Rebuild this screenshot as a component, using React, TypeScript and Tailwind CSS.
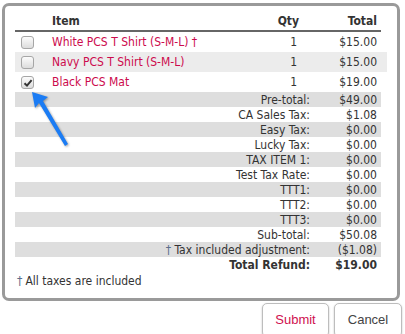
import React from "react";

const items = [
  { name: "White PCS T Shirt (S-M-L) †", qty: "1", total: "$15.00", checked: false },
  { name: "Navy PCS T Shirt (S-M-L)", qty: "1", total: "$15.00", checked: false },
  { name: "Black PCS Mat", qty: "1", total: "$19.00", checked: true },
];

const summary = [
  ["Pre-total:", "$49.00"],
  ["CA Sales Tax:", "$1.08"],
  ["Easy Tax:", "$0.00"],
  ["Lucky Tax:", "$0.00"],
  ["TAX ITEM 1:", "$0.00"],
  ["Test Tax Rate:", "$0.00"],
  ["TTT1:", "$0.00"],
  ["TTT2:", "$0.00"],
  ["TTT3:", "$0.00"],
  ["Sub-total:", "$50.08"],
  ["† Tax included adjustment:", "($1.08)"],
];

function Box({ checked }: { checked: boolean }) {
  return (
    <span className="relative block w-[13px] h-[13px] rounded-[3px] border border-[#a6a6a6] bg-gradient-to-b from-[#fcfcfc] to-[#dcdcdc]">
      {checked && (
        <svg className="absolute left-[1px] top-[1px]" width="10" height="10" viewBox="0 0 10 10">
          <path d="M1.5 5.2 L4 7.6 L8.6 2.2" fill="none" stroke="#333" strokeWidth="2" />
        </svg>
      )}
    </span>
  );
}

export default function App() {
  return (
    <div
      className="relative w-[405px] h-[334px] bg-white overflow-hidden text-[#333]"
      style={{ fontFamily: '"DejaVu Sans Condensed", "DejaVu Sans", sans-serif' }}
    >
      <div className="ml-[2px] mt-[3px] w-[398px] h-[298px] border-[3px] border-[#9a9a9a] rounded-[7px] pl-[10px] pt-[5px] text-[12px]">
        <div className="flex w-[366px] h-[21px] border-b-2 border-[#666] font-bold items-center leading-none">
          <div className="w-[37px]" />
          <div className="flex-1">Item</div>
          <div className="w-[40px] text-right">Qty</div>
          <div className="w-[82px] text-right pr-[4px]">Total</div>
        </div>
        {items.map((it, i) => (
          <div
            key={i}
            className={`flex w-[372px] h-[20px] items-center leading-none ${i === 1 ? "bg-[#ececec]" : ""}`}
          >
            <div className="w-[37px] pl-[6px]">
              <Box checked={it.checked} />
            </div>
            <div className="flex-1 text-[#cc0a4d] whitespace-nowrap">{it.name}</div>
            <div className="w-[37px] text-right pr-[2px]">{it.qty}</div>
            <div className="w-[88px] text-right pr-[10px]">{it.total}</div>
          </div>
        ))}
        {summary.map(([l, v], i) => (
          <div
            key={l}
            className={`flex w-[366px] h-[15px] items-center leading-none ${i % 2 === 0 ? "bg-[#dedede]" : ""}`}
          >
            <div className="flex-1 text-right whitespace-nowrap">
              {l.startsWith("†") ? (
                <>
                  <span className="text-[#5b6e8c]">†</span>
                  {l.slice(1)}
                </>
              ) : (
                l
              )}
            </div>
            <div className="w-[71px] text-right pr-[4px]">{v}</div>
          </div>
        ))}
        <div className="flex w-[366px] h-[15px] items-center leading-none font-bold">
          <div className="flex-1 text-right">Total Refund:</div>
          <div className="w-[71px] text-right pr-[4px]">$19.00</div>
        </div>
        <div className="h-[17px] flex items-center pl-[2px] leading-none">
          <span className="text-[#5b6e8c] mr-[3px]">†</span>All taxes are included
        </div>
      </div>
      <div className="flex justify-end gap-[5px] pr-[3px] mt-[2px]" style={{ fontFamily: '"Liberation Sans", Arial, sans-serif' }}>
        <button className="w-[67px] h-[34px] rounded-[5px] border border-[#bdbdbd] bg-white text-[#d0104f] text-[13px] shadow-[0_1px_2px_rgba(0,0,0,0.25)]">
          Submit
        </button>
        <button className="w-[68px] h-[34px] rounded-[5px] border border-[#bdbdbd] bg-white text-[#444] text-[13px] shadow-[0_1px_2px_rgba(0,0,0,0.25)]">
          Cancel
        </button>
      </div>
      <svg className="absolute left-0 top-0 pointer-events-none" width="405" height="334" style={{ filter: "drop-shadow(1px 1px 1px rgba(0,0,0,0.35))" }}>
        <path d="M32 92 L48 97 L43 101 L68 144 L65 146 L39 103 L35 108 Z" fill="#1b7cf4" />
      </svg>
    </div>
  );
}
